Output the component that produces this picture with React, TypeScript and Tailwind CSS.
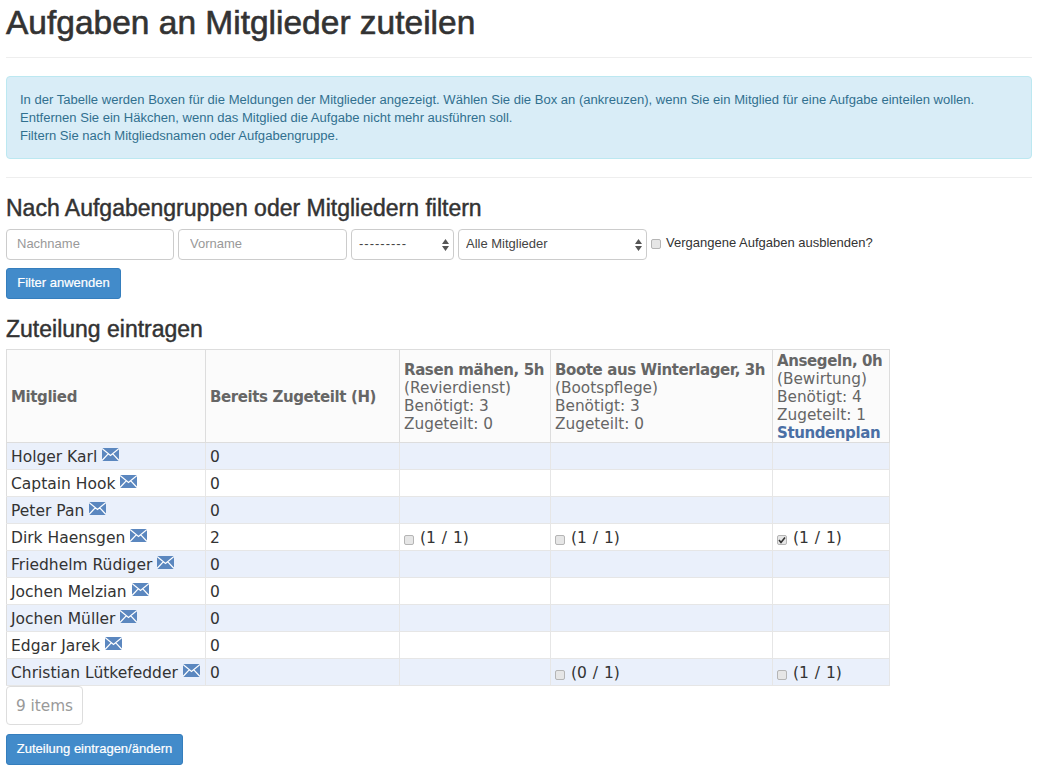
const rows: { name: string; hours: string; cells: (null | { label: string; checked?: boolean })[] }[] = [
  { name: 'Holger Karl', hours: '0', cells: [null, null, null] },
  { name: 'Captain Hook', hours: '0', cells: [null, null, null] },
  { name: 'Peter Pan', hours: '0', cells: [null, null, null] },
  { name: 'Dirk Haensgen', hours: '2', cells: [{ label: '(1 / 1)' }, { label: '(1 / 1)' }, { label: '(1 / 1)', checked: true }] },
  { name: 'Friedhelm Rüdiger', hours: '0', cells: [null, null, null] },
  { name: 'Jochen Melzian', hours: '0', cells: [null, null, null] },
  { name: 'Jochen Müller', hours: '0', cells: [null, null, null] },
  { name: 'Edgar Jarek', hours: '0', cells: [null, null, null] },
  { name: 'Christian Lütkefedder', hours: '0', cells: [null, { label: '(0 / 1)' }, { label: '(1 / 1)' }] },
];

function MailIcon() {
  return (
    <svg width="17" height="13" viewBox="0 0 17 13" className="inline-block align-[1px]">
      <rect width="17" height="13" fill="#5b87bf" />
      <path d="M0 .5 8.5 7.5 17 .5M0 12.5 6.2 5.8M17 12.5 10.8 5.8" fill="none" stroke="#fff" strokeWidth="1.2" />
    </svg>
  );
}

function Arrows() {
  return (
    <svg width="7" height="12" viewBox="0 0 7 12" className="absolute right-[5px] top-[10px] pointer-events-none">
      <path d="M3.5 0 7 5H0zM0 7h7l-3.5 5z" fill="#555" />
    </svg>
  );
}

function Check({ checked }: { checked?: boolean }) {
  return (
    <span className="relative inline-block w-[10px] h-[10px] mr-[6px] align-[-2px]">
      <input
        type="checkbox"
        readOnly
        checked={!!checked}
        className="appearance-none block m-0 w-[10px] h-[10px] rounded-[2px] border border-[#b5b5b5] bg-[#e6e6e6]"
      />
      {checked && (
        <svg width="10" height="10" viewBox="0 0 10 10" className="absolute left-0 top-0">
          <path d="M2 5 4 7.5 8 2.5" fill="none" stroke="#333" strokeWidth="1.6" />
        </svg>
      )}
    </span>
  );
}

function TaskHead({ title, group, need, assigned, link }: { title: string; group: string; need: string; assigned: string; link?: boolean }) {
  return (
    <th className="border border-[#ddd] px-[4px] pt-[2px] text-left align-middle font-normal text-[15.3px] leading-[18px]">
      <div className="font-bold text-[15px] tracking-[-0.4px]">{title}</div>
      <div>({group})</div>
      <div>Benötigt: {need}</div>
      <div>Zugeteilt: {assigned}</div>
      {link && <div className="font-bold text-[15px] tracking-[-0.4px] text-[#4a6fa5]">Stundenplan</div>}
    </th>
  );
}

export default function App() {
  return (
    <div className="w-[1050px] h-[774px] overflow-hidden bg-white pl-[6px] pr-[18px] font-['Liberation_Sans',Arial,sans-serif] text-[#333]">
      <h1 className="pt-[5px] h-[57px] text-[33.5px] leading-[36px] font-normal [-webkit-text-stroke:0.6px_#333]">Aufgaben an Mitglieder zuteilen</h1>
      <hr className="border-[#eee]" />
      <div className="mt-[18px] h-[83px] rounded-[4px] border border-[#bce8f1] bg-[#d9edf7] px-[13px] pt-[14px] text-[13.05px] leading-[18px] text-[#31708f]">
        <p>In der Tabelle werden Boxen für die Meldungen der Mitglieder angezeigt. Wählen Sie die Box an (ankreuzen), wenn Sie ein Mitglied für eine Aufgabe einteilen wollen.</p>
        <p>Entfernen Sie ein Häkchen, wenn das Mitglied die Aufgabe nicht mehr ausführen soll.</p>
        <p>Filtern Sie nach Mitgliedsnamen oder Aufgabengruppe.</p>
      </div>
      <hr className="mt-[18px] border-[#eee]" />

      <h3 className="mt-[18px] h-[24px] text-[23px] leading-[24px] font-normal [-webkit-text-stroke:0.45px_#333]">Nach Aufgabengruppen oder Mitgliedern filtern</h3>
      <div className="mt-[9px] flex items-start gap-[4px] text-[13px]">
        <input placeholder="Nachname" className="w-[168px] h-[31px] rounded-[4px] border border-[#ccc] pl-[10px] pr-[11px] pb-[2px] outline-none placeholder:text-[#999]" />
        <input placeholder="Vorname" className="w-[169px] h-[31px] rounded-[4px] border border-[#ccc] px-[11px] pb-[2px] outline-none placeholder:text-[#999]" />
        <div className="relative w-[103px] h-[31px]">
          <select className="appearance-none w-full h-full rounded-[4px] border border-[#ccc] bg-white px-[7px] pb-[2px] outline-none text-[#444] tracking-[1px]">
            <option>---------</option>
          </select>
          <Arrows />
        </div>
        <div className="relative w-[189px] h-[31px]">
          <select className="appearance-none w-full h-full rounded-[4px] border border-[#ccc] bg-white px-[7px] pb-[2px] outline-none text-[#444]">
            <option>Alle Mitglieder</option>
          </select>
          <Arrows />
        </div>
        <label className="flex items-center h-[29px] text-[#333]">
          <Check />
          <span className="-mt-[2px] -ml-px">Vergangene Aufgaben ausblenden?</span>
        </label>
      </div>
      <button className="block mt-[8px] w-[115px] h-[31px] pb-[2px] rounded-[3px] border border-[#357ebd] bg-[#428bca] text-[13px] text-white [-webkit-text-stroke:0.2px_#fff]">Filter anwenden</button>
      <h3 className="mt-[18px] h-[24px] text-[23px] leading-[24px] font-normal [-webkit-text-stroke:0.45px_#333]">Zuteilung eintragen</h3>

      <table className="mt-[8px] w-[883px] table-fixed border-collapse font-['DejaVu_Sans',Verdana,sans-serif] text-[15.5px] text-[#333]">
        <colgroup>
          <col className="w-[199px]" />
          <col className="w-[194px]" />
          <col className="w-[151px]" />
          <col className="w-[222px]" />
          <col className="w-[117px]" />
        </colgroup>
        <thead className="bg-[#fbfbfb] text-[#666]">
          <tr className="h-[93px]">
            <th className="border border-[#ddd] px-[4px] pt-[2px] text-left align-middle font-bold text-[15px] tracking-[-0.4px]">Mitglied</th>
            <th className="border border-[#ddd] px-[4px] pt-[2px] text-left align-middle font-bold text-[15px] tracking-[-0.4px]">Bereits Zugeteilt (H)</th>
            <TaskHead title="Rasen mähen, 5h" group="Revierdienst" need="3" assigned="0" />
            <TaskHead title="Boote aus Winterlager, 3h" group="Bootspflege" need="3" assigned="0" />
            <TaskHead title="Ansegeln, 0h" group="Bewirtung" need="4" assigned="1" link />
          </tr>
        </thead>
        <tbody>
          {rows.map((row, i) => (
            <tr key={row.name} className={i % 2 === 0 ? 'h-[27px] bg-[#eaf0fb]' : 'h-[27px] bg-white'}>
              <td className="border border-[#e6e6e6] border-l-[#ddd] px-[4px] pt-[2px] whitespace-nowrap leading-[20px]">
                {row.name} <MailIcon />
              </td>
              <td className="border border-[#e6e6e6] px-[4px] pt-[2px] leading-[20px]">{row.hours}</td>
              {row.cells.map((cell, j) => (
                <td key={j} className="border border-[#e6e6e6] px-[4px] pt-[2px] leading-[20px] [word-spacing:1px]">
                  {cell && (
                    <>
                      <Check checked={cell.checked} />
                      {cell.label}
                    </>
                  )}
                </td>
              ))}
            </tr>
          ))}
        </tbody>
      </table>

      <div className="flex w-[77px] h-[39px] pt-[2px] items-center justify-center rounded-[4px] border border-[#ddd] font-['DejaVu_Sans',Verdana,sans-serif] text-[15.3px] text-[#999]">9 items</div>
      <button className="block mt-[9px] w-[177px] h-[31px] pb-[2px] rounded-[3px] border border-[#357ebd] bg-[#428bca] text-[13px] text-white [-webkit-text-stroke:0.2px_#fff]">Zuteilung eintragen/ändern</button>
    </div>
  );
}
